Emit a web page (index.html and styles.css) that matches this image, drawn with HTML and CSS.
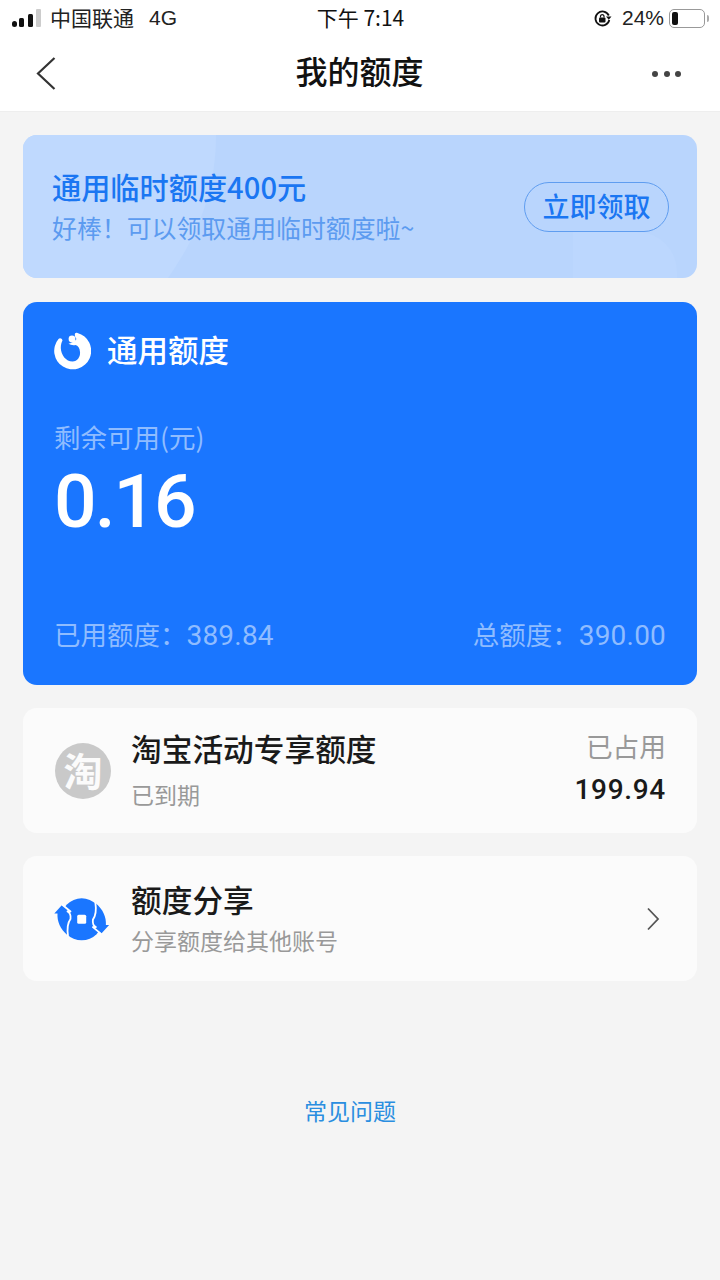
FILE: index.html
```html
<!DOCTYPE html>
<html lang="zh-CN">
<head>
<meta charset="utf-8">
<title>我的额度</title>
<link rel="stylesheet" href="styles.css">
</head>
<body>
<header class="top">
  <div class="status">
    <div class="status-left">
      <svg class="signal" width="30" height="20" viewBox="0 0 30 20"><rect x="0" y="13" width="5" height="6" rx="2.500" fill="#111"/><rect x="7" y="10" width="5" height="9" rx="1.500" fill="#111"/><rect x="16" y="6" width="5" height="13" rx="1.500" fill="#111"/><rect x="24" y="1" width="5" height="18" rx="1" fill="#ccc"/></svg>
      <span class="carrier">中国联通</span><span class="net">4G</span>
    </div>
    <div class="clock">下午 7:14</div>
    <div class="status-right">
      <svg width="19" height="19" viewBox="0 0 19 19"><path d="M15.800 6.500A7 7 0 1 0 16.300 11" fill="none" stroke="#111" stroke-width="1.800"/><path d="M13 7.500h5.500l-2.700 3.200z" fill="#111"/><rect x="6" y="8.500" width="6.500" height="5" rx="1" fill="#111"/><path d="M7.500 8.500V7a1.800 1.800 0 0 1 3.500 0v1.500" fill="none" stroke="#111" stroke-width="1.200"/></svg>
      <span class="pct">24%</span>
      <div class="battery"><div class="battery-level"></div></div>
      <div class="battery-tip"></div>
    </div>
  </div>
  <nav class="nav">
    <svg class="back" width="22" height="36" viewBox="0 0 22 36"><path d="M19.500 2 3 17.500 19.500 33" fill="none" stroke="#333" stroke-width="2.200"/></svg>
    <h1 class="title">我的额度</h1>
    <div class="more"><i></i><i></i><i></i></div>
  </nav>
</header>
<main class="content">
  <section class="banner">
    <svg class="banner-shape-a" width="200" height="143" viewBox="0 0 200 143"><path d="M0 0H193C193 55 175 100 145 143H0z" fill="#bfd9fe"/></svg>
    <div class="banner-shape-b"></div>
    <div class="banner-text">
      <div class="banner-title">通用临时额度400元</div>
      <div class="banner-sub">好棒！可以领取通用临时额度啦~</div>
    </div>
    <div class="claim">立即领取</div>
  </section>
  <section class="quota">
    <div class="quota-head">
      <svg class="quota-logo" width="37" height="38" viewBox="0 0 37 38"><path fill="#fff" d="M23.500 1A18.500 18.500 0 1 1 4.500 7C5.500 5.800 8 6 8.500 8.500 7.500 10 6.800 13 6.800 16 7 23 12 29.500 18.500 29.500 24 29.500 26.500 24 26 20 25.800 16 24 13.500 21.500 13 19 13.500 16.500 13 14.500 11.800 18 11 21 9 22.500 7 21 5.500 20.500 3 21 1.500 21.500.8 22.500.6 23.500 1z"/><circle cx="18" cy="7" r="3.400" fill="#fff"/></svg>
      <span class="quota-name">通用额度</span>
    </div>
    <div class="quota-label">剩余可用(元)</div>
    <div class="quota-amount">0.16</div>
    <div class="quota-foot">
      <span>已用额度：<span class="foot-num">389.84</span></span>
      <span>总额度：<span class="foot-num">390.00</span></span>
    </div>
  </section>
  <section class="row row-taobao">
    <div class="tao-icon">淘</div>
    <div class="row-main">
      <div class="row-title">淘宝活动专享额度</div>
      <div class="row-sub row-sub-gap">已到期</div>
    </div>
    <div class="row-side">
      <div class="side-label">已占用</div>
      <div class="side-value">199.94</div>
    </div>
  </section>
  <section class="row row-share">
    <svg class="share-icon" width="58" height="46" viewBox="0 0 58 46"><circle cx="27.700" cy="23.300" r="21" fill="#1a76ff"/><path d="M8 9 .3 17.500H3.500C3 25 6 33 14 39.500 13 33 13.500 27 16.500 23 17 19 15.500 16.500 13.500 15.500H16z" fill="#1a76ff"/><path d="M47.400 37.600 55.100 29.100H51.900C52.400 21.600 49.400 13.600 41.400 7.100 42.400 13.600 41.900 19.600 38.900 23.600 38.400 27.600 39.900 30.100 41.900 31.100H39.400z" fill="#1a76ff"/><path d="M8 8.500 16.500 15.500H13.500C15.500 16.500 17 19 16.500 23 13.500 27 13 33 14 40" fill="none" stroke="#fff" stroke-width="1.800" stroke-linejoin="round"/><path d="M47.400 38.100 38.900 31.100H41.900C39.900 30.100 38.400 27.600 38.900 23.600 41.900 19.600 42.400 13.600 41.400 6.600" fill="none" stroke="#fff" stroke-width="1.800" stroke-linejoin="round"/><rect x="23.200" y="18.800" width="9" height="9" rx="1.500" fill="#fff"/></svg>
    <div class="row-main">
      <div class="row-title">额度分享</div>
      <div class="row-sub">分享额度给其他账号</div>
    </div>
    <svg class="chev" width="14" height="24" viewBox="0 0 14 24"><path d="M1 1.500 11 12 1 22.500" fill="none" stroke="#555" stroke-width="1.800"/></svg>
  </section>
  <a class="faq">常见问题</a>
</main>
</body>
</html>
```
FILE: styles.css
```css
* { box-sizing: border-box; }
html, body { margin: 0; padding: 0; }
body {
  width: 720px;
  min-height: 1280px;
  background: #f4f4f4;
  font-family: "Noto Sans CJK SC", "Noto Sans", sans-serif;
  color: #111;
}
.top {
  background: #fff;
  height: 112px;
  border-bottom: 1px solid #eeeeee;
}
.status {
  height: 36px;
  display: grid;
  grid-template-columns: 1fr auto 1fr;
  align-items: center;
  padding: 0 11px 0 12px;
}
.status-left { display: flex; align-items: center; }
.signal { margin-right: 8px; }
.carrier { font-size: 21px; line-height: 30px; padding-bottom: 2px; color: #222; }
.net { margin-left: 15px; font-family: "Liberation Sans", sans-serif; font-size: 21px; color: #222; }
.clock { font-size: 21px; line-height: 30px; padding-bottom: 3px; color: #111; }
.status-right { display: flex; align-items: center; justify-content: flex-end; }
.pct { margin-left: 10px; font-family: "Liberation Sans", sans-serif; font-size: 21px; color: #222; }
.battery {
  width: 36px;
  height: 19px;
  margin-left: 5px;
  border: 1.500px solid #999;
  border-radius: 5px;
  padding: 2px;
}
.battery-level { width: 6px; height: 100%; background: #111; border-radius: 2px; }
.battery-tip { width: 2px; height: 7px; margin-left: 2px; background: #aaa; border-radius: 0 2px 2px 0; }
.nav {
  height: 75px;
  display: grid;
  grid-template-columns: 1fr auto 1fr;
  align-items: center;
  padding: 0 36px 0 35px;
}
.back { display: block; }
.title { margin: 0; padding-bottom: 8px; font-size: 32px; font-weight: 500; line-height: 1; color: #111; }
.more { display: flex; justify-content: flex-end; gap: 5.500px; padding-right: 3px; }
.more i { width: 6px; height: 6px; border-radius: 50%; background: #444; }
.content {
  display: flex;
  flex-direction: column;
  padding: 23px 23px 0;
}
.banner {
  position: relative;
  overflow: hidden;
  height: 143px;
  border-radius: 14px;
  background: #b9d5fd;
  display: flex;
  align-items: center;
  justify-content: space-between;
  padding: 0 28px 3px 29px;
}
.banner-shape-a { position: absolute; left: 0; top: 0; }
.banner-shape-b {
  position: absolute;
  right: 20px;
  bottom: 0;
  width: 104px;
  height: 46px;
  background: #bcd7fe;
  border-radius: 0 40px 0 0;
}
.banner-text { position: relative; }
.banner-title { font-size: 29.200px; line-height: 36px; font-weight: 500; color: #1a76f2; }
.banner-sub { margin-top: 7px; font-size: 24.900px; line-height: 32px; color: #5c9bf0; }
.claim {
  position: relative;
  width: 145px;
  height: 50px;
  margin-top: 3px;
  border: 1px solid #5f9df0;
  border-radius: 25px;
  text-align: center;
  line-height: 45px;
  font-size: 27px;
  font-weight: 500;
  color: #1a76f2;
}
.quota {
  margin-top: 24px;
  height: 383px;
  border-radius: 14px;
  background: #1a76ff;
  padding: 30px 31px 0;
  display: flex;
  flex-direction: column;
}
.quota-head { display: flex; align-items: center; height: 37px; }
.quota-logo { flex: none; }
.quota-name { margin-left: 16px; padding-bottom: 4px; font-size: 30.500px; font-weight: 500; color: #fff; }
.quota-label { margin-top: 51px; font-size: 26.500px; line-height: 34px; color: #8fbcff; }
.quota-amount {
  margin-top: 6px;
  font-family: "Roboto", sans-serif;
  font-size: 75px;
  font-weight: 500;
  line-height: 82px;
  letter-spacing: -2px;
  color: #fff;
}
.quota-foot {
  margin-top: 75px;
  display: flex;
  justify-content: space-between;
  font-size: 26.500px;
  line-height: 34px;
  color: #8fbcff;
}
.foot-num { font-family: "Roboto", sans-serif; font-size: 28px; letter-spacing: .2px; }
.row {
  margin-top: 23px;
  height: 125px;
  border-radius: 14px;
  background: #fbfbfb;
  display: flex;
  align-items: center;
}
.row-taobao { padding: 0 31px 0 32px; }
.row-share { padding: 0 36px 0 31px; }
.tao-icon {
  width: 56px;
  height: 56px;
  border-radius: 50%;
  background: #c9c9c9;
  color: #fbfbfb;
  font-size: 39px;
  font-weight: 700;
  line-height: 52px;
  text-align: center;
  flex: none;
}
.share-icon { flex: none; margin-right: 19px; }
.row-main { flex: 1; margin-left: 20px; padding-bottom: 3px; }
.row-share .row-main { margin-left: 0; }
.row-title { font-size: 30.700px; line-height: 40px; font-weight: 500; color: #1a1a1a; }
.row-sub { margin-top: 5px; font-size: 23px; line-height: 32px; color: #999; }
.row-sub-gap { margin-top: 10px; }
.row-side { text-align: right; padding-bottom: 6px; }
.side-label { font-size: 26.700px; line-height: 36px; color: #999; }
.side-value {
  margin-top: 8px;
  font-family: "Roboto", sans-serif;
  font-size: 28px;
  line-height: 36px;
  letter-spacing: .7px;
  font-weight: 500;
  color: #1a1a1a;
}
.chev { flex: none; }
.faq {
  margin-top: 113px;
  align-self: center;
  margin-right: 20px;
  font-size: 23px;
  line-height: 32px;
  color: #2a8ee0;
}
```
